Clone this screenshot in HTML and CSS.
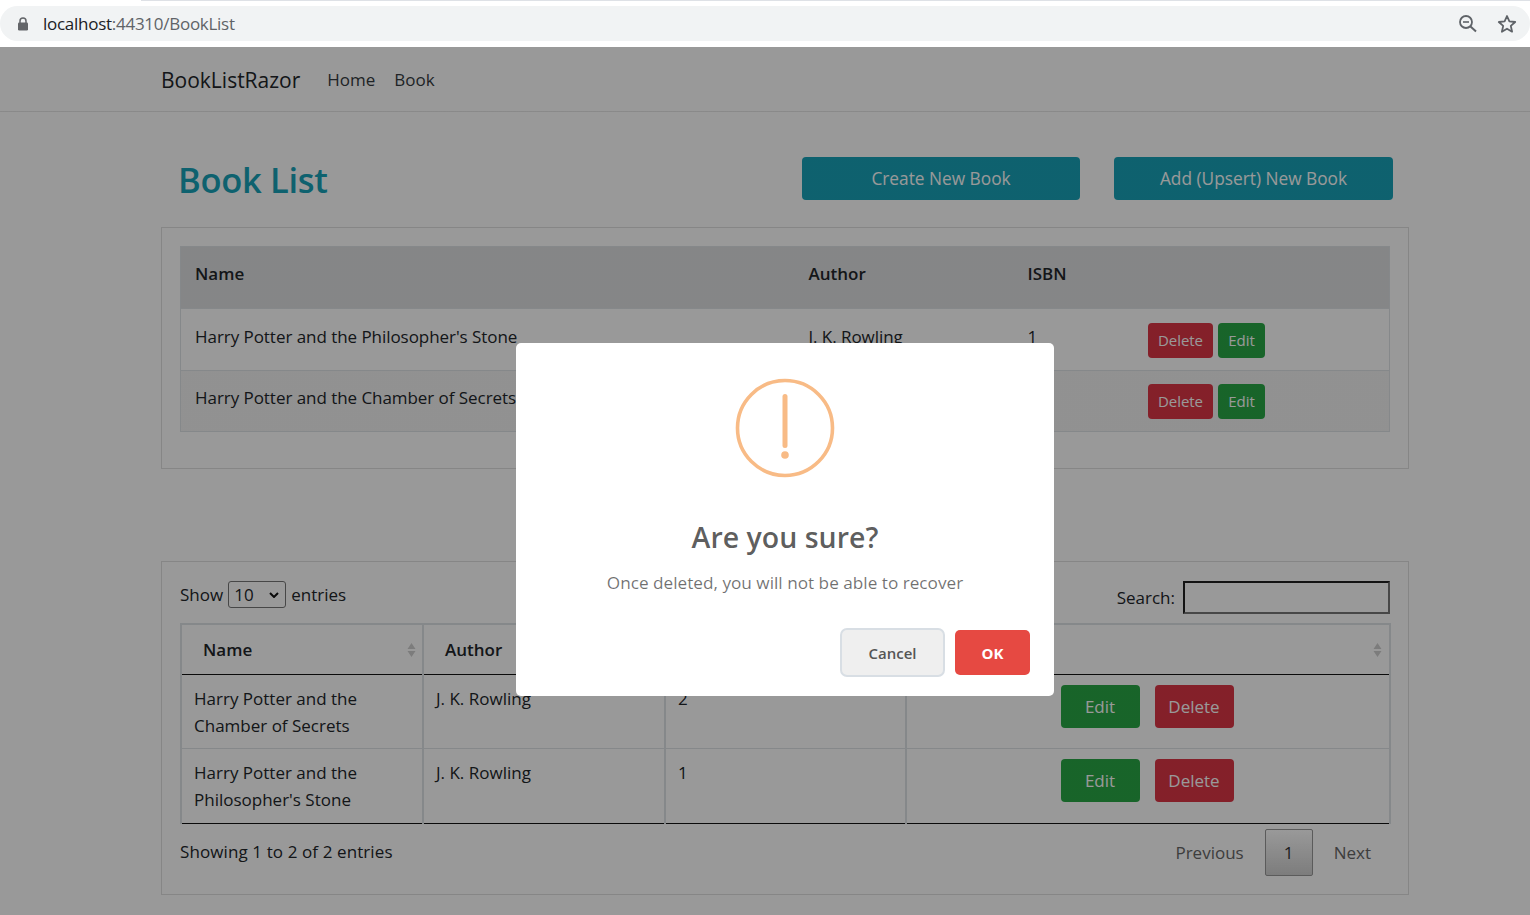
FILE: index.html
```html
<!DOCTYPE html>
<html lang="en">
<head>
<meta charset="utf-8">
<title>BookListRazor</title>
<link rel="stylesheet" href="styles.css">
</head>
<body>
<div class="chrome">
  <div class="tabstrip"></div>
  <div class="omnibox">
    <svg class="lock" width="12" height="14" viewBox="0 0 12 14"><path d="M3 6V4a3 3 0 0 1 6 0v2" fill="none" stroke="#636569" stroke-width="1.5"/><rect x="1" y="5.5" width="10" height="8" rx="1.2" fill="#636569"/></svg>
    <span class="url"><span class="host">localhost</span>:44310/BookList</span>
    <svg class="zoom-ic" width="20" height="20" viewBox="0 0 20 20"><circle cx="8" cy="8" r="6" fill="none" stroke="#5f6368" stroke-width="1.8"/><path d="M5 8h6" stroke="#5f6368" stroke-width="1.6"/><path d="M12.5 12.5L18 17.5" stroke="#5f6368" stroke-width="2"/></svg>
    <svg class="star-ic" width="20" height="20" viewBox="0 0 20 20"><path d="M10 2l2.4 5.4 5.8.6-4.4 3.9 1.3 5.8L10 14.7l-5.1 3 1.3-5.8L1.8 8l5.8-.6z" fill="none" stroke="#5f6368" stroke-width="1.8" stroke-linejoin="round"/></svg>
  </div>
</div>
<nav class="navbar">
  <span class="brand">BookListRazor</span>
  <a class="nav-link">Home</a>
  <a class="nav-link">Book</a>
</nav>
<main class="container">
  <div class="title-row">
    <h1 class="page-title">Book List</h1>
    <a class="btn-info btn-create">Create New Book</a>
    <a class="btn-info btn-upsert">Add (Upsert) New Book</a>
  </div>
  <section class="card card-top">
    <table class="table-plain">
      <colgroup><col class="c1"><col class="c2"><col class="c3"><col class="c4"></colgroup>
      <thead><tr><th>Name</th><th>Author</th><th>ISBN</th><th></th></tr></thead>
      <tbody>
        <tr><td>Harry Potter and the Philosopher's Stone</td><td>J. K. Rowling</td><td>1</td><td><div class="actions"><a class="btn-sm red">Delete</a><a class="btn-sm green">Edit</a></div></td></tr>
        <tr class="odd"><td>Harry Potter and the Chamber of Secrets</td><td>J. K. Rowling</td><td>2</td><td><div class="actions"><a class="btn-sm red">Delete</a><a class="btn-sm green">Edit</a></div></td></tr>
      </tbody>
    </table>
  </section>
  <section class="card card-bottom">
    <div class="dt-top">
      <label class="dt-length">Show <select class="dt-select"><option>10</option></select> entries</label>
      <label class="dt-search">Search: <input class="dt-input" type="text"></label>
    </div>
    <table class="table-dt">
      <colgroup><col class="d1"><col class="d1"><col class="d3"><col class="d4"></colgroup>
      <thead>
        <tr>
          <th><span>Name</span><svg class="sort" width="9" height="16" viewBox="0 0 9 16"><path d="M4.5 1L8.5 7H.5zM4.5 15L.5 9h8z" fill="#cfcfcf"/></svg></th>
          <th><span>Author</span><svg class="sort" width="9" height="16" viewBox="0 0 9 16"><path d="M4.5 1L8.5 7H.5zM4.5 15L.5 9h8z" fill="#cfcfcf"/></svg></th>
          <th><span>ISBN</span></th>
          <th><svg class="sort sort-last" width="9" height="16" viewBox="0 0 9 16"><path d="M4.5 1L8.5 7H.5zM4.5 15L.5 9h8z" fill="#cfcfcf"/></svg></th>
        </tr>
      </thead>
      <tbody>
        <tr><td>Harry Potter and the Chamber of Secrets</td><td>J. K. Rowling</td><td>2</td><td><div class="dt-actions"><a class="btn-md green">Edit</a><a class="btn-md red">Delete</a></div></td></tr>
        <tr><td>Harry Potter and the Philosopher's Stone</td><td>J. K. Rowling</td><td>1</td><td><div class="dt-actions"><a class="btn-md green">Edit</a><a class="btn-md red">Delete</a></div></td></tr>
      </tbody>
    </table>
    <div class="dt-bottom">
      <span class="dt-info">Showing 1 to 2 of 2 entries</span>
      <div class="pager"><span class="page-text">Previous</span><span class="page-current">1</span><span class="page-text">Next</span></div>
    </div>
  </section>
</main>
<div class="overlay">
  <div class="modal">
    <svg class="warn" width="100" height="100" viewBox="0 0 100 100"><circle cx="50" cy="50" r="47.5" fill="none" stroke="#f8bb86" stroke-width="3.6"/><rect x="47.5" y="16" width="5" height="54" rx="2.5" fill="#f8bb86"/><circle cx="50" cy="77" r="3.8" fill="#f8bb86"/></svg>
    <h2 class="modal-title">Are you sure?</h2>
    <p class="modal-text">Once deleted, you will not be able to recover</p>
    <div class="modal-actions">
      <button class="swal-cancel">Cancel</button>
      <button class="swal-ok">OK</button>
    </div>
  </div>
</div>
</body>
</html>
```
FILE: styles.css
```css
* { box-sizing: border-box; }
html, body { margin: 0; height: 915px; overflow: hidden; background: #fff; }
body { font-family: "Open Sans", "Noto Sans", sans-serif; font-size: 17px; line-height: 27px; color: #212529; width: 1530px; position: relative; }

.chrome { height: 47px; background: #fff; }
.tabstrip { height: 1px; margin-left: 141px; background: #dee1e6; }
.omnibox { height: 35px; margin-top: 5px; background: #f1f3f4; border-radius: 18px; display: flex; align-items: center; padding: 0 13px 0 17px; }
.lock { margin-right: 14px; }
.url { font-size: 17px; letter-spacing: -0.27px; color: #5f6368; flex: 1; }
.host { color: #202124; }
.zoom-ic { margin-right: 19px; }

.navbar { height: 65px; border-bottom: 1px solid #e5e5e5; display: flex; align-items: center; padding-left: 161px; }
.brand { font-size: 21px; margin: 2px 27px 0 0; color: #212529; }
.nav-link { font-size: 17px; margin-right: 19px; color: #343a40; }
.nav-link:last-child { margin-right: 0; }

.container { width: 1248px; margin-left: 161px; }
.title-row { display: flex; align-items: flex-start; height: 115px; padding: 45px 0 0 17px; }
.page-title { font-size: 34.5px; line-height: 44px; font-weight: 600; letter-spacing: -0.3px; margin: 1px 0 0; color: #17a2b8; width: 624px; }
.btn-info { height: 43px; background: #17a2b8; color: #fff; border-radius: 4px; display: flex; align-items: center; justify-content: center; font-size: 17.3px; }
.btn-create { width: 278px; margin-right: 34px; }
.btn-upsert { width: 279px; }

.card { border: 1px solid #dfdfdf; }
.card-top { height: 242px; padding: 18px; }
.card-bottom { height: 334px; margin-top: 92px; padding: 0 18px; }

table { border-collapse: collapse; table-layout: fixed; }
.table-plain { width: 1209px; border: 1px solid #dee2e6; }
.c1 { width: 614px; } .c2 { width: 219px; } .c3 { width: 120px; } .c4 { width: 256px; }
.table-plain th { background: #dedfe1; height: 62px; padding: 13px 14px; text-align: left; vertical-align: top; font-weight: 600; }
.table-plain td { padding: 13.5px 14px 12px; vertical-align: top; border-top: 1px solid #dee2e6; letter-spacing: -0.05px; }
.table-plain tr.odd td { background: #f2f2f2; }
.actions { display: flex; gap: 5px; }
.btn-sm { height: 35px; color: #fff; border-radius: 4px; font-size: 15px; padding-left: 1px; display: flex; align-items: center; justify-content: center; }
.btn-sm.red { width: 65px; background: #dc3545; }
.btn-sm.green { width: 47px; background: #28a745; }

.dt-top { display: flex; justify-content: space-between; height: 61px; padding-top: 19px; }
.dt-length { display: flex; align-items: center; gap: 5px; height: 27px; }
.dt-select { appearance: none; width: 58px; height: 27px; font: inherit; line-height: 20px; padding: 0 0 0 5px; background: #fff url("data:image/svg+xml,%3Csvg xmlns='http://www.w3.org/2000/svg' width='10' height='6'%3E%3Cpath d='M1 1l4 4 4-4' fill='none' stroke='%23111' stroke-width='2'/%3E%3C/svg%3E") no-repeat 40px center; border: 1px solid #767676; border-radius: 3px; color: #212529; }
.dt-search { display: flex; align-items: center; gap: 8px; height: 33px; }
.dt-input { width: 207px; height: 33px; background: #fff; border-width: 2px; border-style: solid; border-color: #202020 #767676 #767676 #202020; padding: 0; }

.table-dt { width: 1209px; border: 2px solid #dee2e6; border-bottom: 0; position: relative; }
.d1 { width: 242px; } .d3 { width: 241px; } .d4 { width: 484px; }
.table-dt th { height: 50px; text-align: left; font-weight: 600; padding: 0 12px 0 21px; border-right: 2px solid #dee2e6; border-bottom: 1px solid #111; position: relative; }
.table-dt th span { display: inline-block; }
.sort { position: absolute; right: 6px; top: 17px; }
.sort-last { right: 7px; }
.table-dt td { height: 73px; padding: 10px 12px 9px; vertical-align: top; border-right: 2px solid #dee2e6; border-bottom: 1px solid #dee2e6; }
.table-dt tbody tr:last-child td { height: 74px; padding-bottom: 10px; border-bottom: 1px solid #111; }
.dt-actions { display: flex; justify-content: center; gap: 15px; padding-right: 2px; }
.btn-md { width: 79px; height: 43px; color: #fff; border-radius: 4px; font-size: 17px; display: flex; align-items: center; justify-content: center; }
.btn-md.red { background: #dc3545; }
.btn-md.green { background: #28a745; }

.dt-bottom { display: flex; justify-content: space-between; padding-top: 5px; }
.dt-info { padding-top: 9px; letter-spacing: 0.1px; }
.pager { display: flex; align-items: center; margin-right: -2px; }
.page-text { color: #666; padding: 0 21px; }
.page-current { width: 48px; height: 47px; display: flex; align-items: center; justify-content: center; border: 1px solid #979797; border-radius: 2px; background: linear-gradient(#fff, #cfcfcf); color: #333; }

.overlay { position: absolute; top: 0; left: 0; width: 1570px; height: 915px; background: linear-gradient(transparent 47px, rgba(0,0,0,.4) 47px); display: flex; justify-content: center; padding-top: 343px; }
.modal { width: 538px; height: 353px; background: #fff; border-radius: 5px; display: flex; flex-direction: column; align-items: center; padding-top: 35px; }
.warn { display: block; }
.modal-title { margin: 37px 0 0; font-size: 28.5px; line-height: 44px; font-weight: 600; color: rgba(0,0,0,.65); }
.modal-text { margin: 10px 0 0; font-size: 17.2px; line-height: 27px; color: rgba(0,0,0,.56); }
.modal-actions { align-self: flex-end; display: flex; align-items: center; gap: 10px; margin: 32px 24px 0 0; }
.swal-cancel { width: 105px; height: 49px; background: #efefef; color: #555; border: 2px solid #d8dee4; border-radius: 7px; font: 600 15px "Open Sans", sans-serif; }
.swal-ok { width: 75px; height: 45px; background: #e64942; color: #fff; border: 0; border-radius: 5px; font: 700 15px "Open Sans", sans-serif; }
```
